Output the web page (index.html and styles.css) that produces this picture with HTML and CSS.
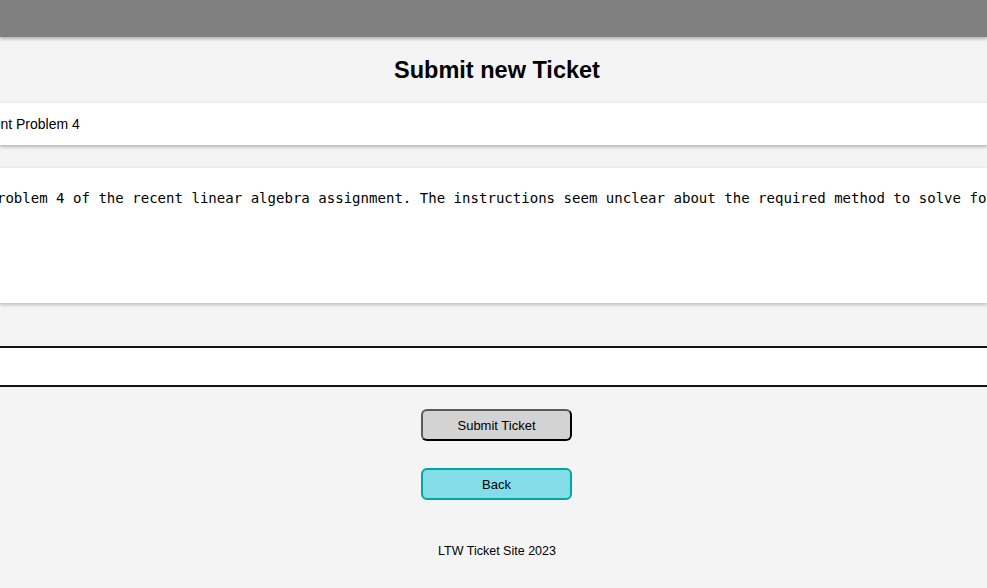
FILE: index.html
```html
<!DOCTYPE html>
<html lang="en">
<head>
<meta charset="utf-8">
<title>Submit new Ticket</title>
<link rel="stylesheet" href="styles.css">
</head>
<body>
<header class="topbar"></header>
<main class="page">
  <h1 class="title">Submit new Ticket</h1>
  <form class="ticket-form">
    <div class="field field-title"><span class="field-text">Assignment Problem 4</span></div>
    <div class="field field-desc"><span class="desc-text">I'm having trouble with Problem 4 of the recent linear algebra assignment. The instructions seem unclear about the required method to solve for the eigenvalues.</span></div>
    <div class="field field-select"></div>
    <div class="actions">
      <button type="button" class="btn btn-submit">Submit Ticket</button>
      <button type="button" class="btn btn-back">Back</button>
    </div>
  </form>
</main>
<footer class="footer">LTW Ticket Site 2023</footer>
</body>
</html>
```

FILE: styles.css
```css
* { box-sizing: border-box; }

html, body {
  margin: 0;
  padding: 0;
  height: 100%;
  overflow: hidden;
}

body {
  background: #f4f4f4;
  font-family: "Liberation Sans", Arial, sans-serif;
  color: #000;
}

.topbar {
  height: 37px;
  background: #808080;
  box-shadow: 0 2px 3px rgba(0, 0, 0, 0.28);
  position: relative;
  z-index: 1;
}

.page {
  display: flex;
  flex-direction: column;
}

.title {
  margin: 19px 0 0 7px;
  font-size: 23.5px;
  line-height: 28px;
  font-weight: bold;
  text-align: center;
}

.ticket-form {
  display: flex;
  flex-direction: column;
  margin-top: 18px;
}

.field {
  background: #fff;
  overflow: hidden;
  white-space: pre;
}

.field-title {
  height: 43px;
  border-top: 1px solid #ececec;
  box-shadow: 0 2px 3px rgba(0, 0, 0, 0.25);
  font-size: 14px;
  line-height: 42px;
  text-indent: -61px;
}

.field-desc {
  margin-top: 22px;
  height: 136px;
  border-top: 1px solid #ececec;
  box-shadow: 0 2px 3px rgba(0, 0, 0, 0.22);
  padding-top: 22px;
  font-family: "DejaVu Sans Mono", monospace;
  font-size: 14.05px;
  line-height: 17px;
  text-indent: -214.5px;
}

.field-select {
  margin-top: 43px;
  height: 41px;
  border-top: 2px solid #151515;
  border-bottom: 2px solid #151515;
}

.actions {
  display: flex;
  flex-direction: column;
  align-items: center;
  gap: 27px;
  margin-top: 22px;
  padding-left: 6px;
}

.btn {
  width: 151px;
  height: 32px;
  border-radius: 6px;
  border-width: 2px;
  border-style: solid;
  font-family: "Liberation Sans", Arial, sans-serif;
  font-size: 13px;
  color: #000;
  padding: 0;
}

.btn-submit {
  background: #d3d3d3;
  border-color: #5a5a5a #000 #000 #5a5a5a;
}

.btn-back {
  background: #83dde9;
  border-color: #00a6a3;
}

.footer {
  margin-top: 44px;
  padding-left: 7px;
  text-align: center;
  font-size: 12.5px;
  line-height: 15px;
}
```
